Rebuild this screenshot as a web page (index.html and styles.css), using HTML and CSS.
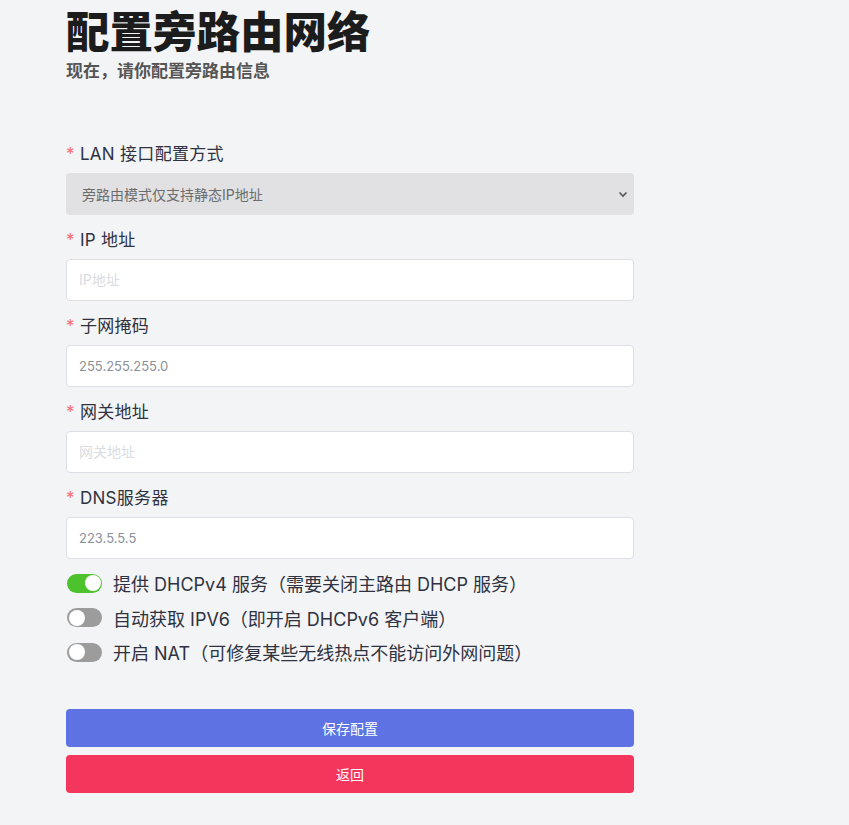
FILE: index.html
```html
<!DOCTYPE html>
<html lang="zh-CN">
<head>
    <meta charset="UTF-8">
    <meta name="viewport" content="width=device-width, initial-scale=1.0">
    <title>配置旁路由网络</title>
    <link rel="stylesheet" href="styles.css">
</head>
<body>
    <div class="page">
        <h1 class="title">配置旁路由网络</h1>
        <p class="subtitle">现在，请你配置旁路由信息</p>

        <form class="form">
            <div class="fields">
                <div class="field">
                    <label class="label"><span class="star">*</span> LAN 接口配置方式</label>
                    <div class="select">
                        <span>旁路由模式仅支持静态IP地址</span>
                        <svg width="10" height="7" viewBox="0 0 10 7"><path d="M1.5 1.5 5 5l3.5-3.5" fill="none" stroke="#555" stroke-width="1.6"/></svg>
                    </div>
                </div>
                <div class="field">
                    <label class="label"><span class="star">*</span> IP 地址</label>
                    <input class="input" type="text" placeholder="IP地址">
                </div>
                <div class="field">
                    <label class="label"><span class="star">*</span> 子网掩码</label>
                    <input class="input" type="text" value="255.255.255.0">
                </div>
                <div class="field">
                    <label class="label"><span class="star">*</span> 网关地址</label>
                    <input class="input" type="text" placeholder="网关地址">
                </div>
                <div class="field">
                    <label class="label"><span class="star">*</span> DNS服务器</label>
                    <input class="input" type="text" value="223.5.5.5">
                </div>
            </div>

            <div class="switches">
                <label class="switch-row"><span class="switch on"></span>提供 DHCPv4 服务（需要关闭主路由 DHCP 服务）</label>
                <label class="switch-row"><span class="switch"></span>自动获取 IPV6（即开启 DHCPv6 客户端）</label>
                <label class="switch-row"><span class="switch"></span>开启 NAT（可修复某些无线热点不能访问外网问题）</label>
            </div>

            <div class="actions">
                <button type="button" class="btn btn-save">保存配置</button>
                <button type="button" class="btn btn-back">返回</button>
            </div>
        </form>
    </div>
</body>
</html>
```

FILE: styles.css
```css
* {
    box-sizing: border-box;
    margin: 0;
    padding: 0;
}

body {
    background-color: #f3f4f6;
    font-family: Inter, "Noto Sans CJK SC", sans-serif;
    color: #303133;
}

.page {
    width: 568px;
    margin-left: 66px;
    padding-top: 6px;
}

.title {
    font-size: 43.5px;
    font-weight: 900;
    line-height: 52px;
    color: #1c1c1c;
}

.subtitle {
    font-size: 17px;
    font-weight: 700;
    color: #555;
    line-height: 22px;
    margin-top: 2px;
}

.form {
    margin-top: 60px;
}

.fields {
    display: flex;
    flex-direction: column;
    gap: 13px;
}

.label {
    display: block;
    font-size: 17px;
    line-height: 24px;
    height: 24px;
    margin-bottom: 7px;
    color: #2f3240;
    letter-spacing: 0.3px;
}

.star {
    color: #f56c6c;
}

.select {
    height: 42px;
    background-color: #e1e1e3;
    border-radius: 4px;
    display: flex;
    align-items: center;
    justify-content: space-between;
    padding: 0 6px 0 16px;
    font-size: 14px;
    color: #6c6c6c;
}

.input {
    display: block;
    width: 100%;
    height: 42px;
    border: 1px solid #dcdfe6;
    border-radius: 4px;
    background-color: #fff;
    padding: 0 12px;
    font-family: inherit;
    font-size: 13px;
    color: #8a8f99;
    outline: none;
}

.input::placeholder {
    color: #d9dce1;
    font-size: 14px;
}

.switches {
    margin-top: 7px;
}

.switch-row {
    display: flex;
    align-items: center;
    height: 34.5px;
    font-size: 18px;
    color: #2f3240;
}

.switch {
    position: relative;
    width: 35px;
    height: 19px;
    border-radius: 10px;
    background-color: #9c9c9c;
    margin: 0 11px 0 1px;
    flex-shrink: 0;
}

.switch::after {
    content: "";
    position: absolute;
    top: 1.5px;
    left: 1.5px;
    width: 16px;
    height: 16px;
    border-radius: 50%;
    background-color: #fff;
}

.switch.on {
    background-color: #4cc22d;
}

.switch.on::after {
    left: 17.5px;
}

.actions {
    margin-top: 39px;
    display: flex;
    flex-direction: column;
    gap: 8px;
}

.btn {
    height: 38px;
    border: none;
    border-radius: 4px;
    color: #fff;
    font-family: inherit;
    font-size: 14px;
    cursor: pointer;
}

.btn-save {
    background-color: #5e72e4;
}

.btn-back {
    background-color: #f5365c;
}
```
